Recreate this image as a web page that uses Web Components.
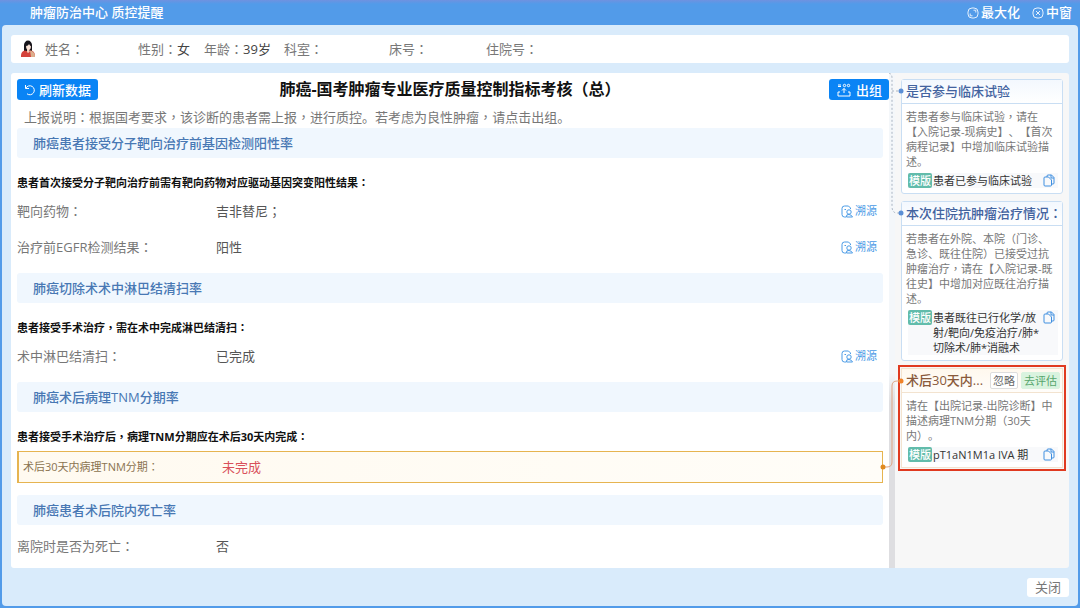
<!DOCTYPE html>
<html lang="zh-CN">
<head>
<meta charset="utf-8">
<meta name="viewport" content="width=device-width, initial-scale=1">
<title>肿瘤防治中心 质控提醒</title>
<style>
  html, body { margin: 0; }
  body {
    font-family: "Open Sans", "Noto Sans CJK SC", sans-serif;
    font-size: 13px; line-height: 20px; color: #555;
    text-spacing-trim: space-all;
  }
</style>
</head>
<body>
<qc-window></qc-window>

<script>
const BASE = `
  *, *::before { box-sizing: border-box; }
  h1, h2, h3, p { margin: 0; font-size: inherit; font-weight: inherit; }
  button { font: inherit; color: inherit; border: 0; margin: 0; padding: 0; background: none; cursor: pointer; white-space: nowrap; }
  svg { display: block; flex: none; }
  .mid { font-family: "Noto Sans CJK TC", sans-serif; line-height: 1; }
`;
// Colons, commas and brackets are set in the centred full-width form.
const mid = (s) => s.replace(/[：，；（）]/g, '<span class="mid" lang="zh-TW">$&</span>');

class Base extends HTMLElement {
  connectedCallback() {
    if (this.shadowRoot) return;
    this.attachShadow({ mode: 'open' }).innerHTML = `<style>${BASE}${this.css()}</style>${this.html()}`;
  }
  get(name) { return this.getAttribute(name) || ''; }
}

customElements.define('title-bar', class extends Base {
  css() { return `
    :host { display: flex; justify-content: space-between; height: 25px; padding: 0 8px 0 30px; color: #fff;
      background: linear-gradient(#6f92e0, #529be9 4px, #529be9); line-height: 25px; }
    h1 { font-weight: 500; }
    .tools { display: flex; gap: 12px; }
    button { display: flex; align-items: center; gap: 2px; font-weight: 500; }
  `; }
  html() { return `
    <h1>肿瘤防治中心 质控提醒</h1>
    <div class="tools">
      <button><svg width="12" height="12" viewBox="0 0 12 12" fill="none" stroke="#e4f0fd"><rect x="1" y="1" width="10" height="10" rx="4"/><path d="M6.5 3.2h2.3v2.3M5.5 8.8H3.2V6.5"/></svg>最大化</button>
      <button><svg width="12" height="12" viewBox="0 0 12 12" fill="none" stroke="#e4f0fd"><rect x="1" y="1" width="10" height="10" rx="4"/><path d="M4 4l4 4M8 4l-4 4"/></svg>中窗</button>
    </div>`; }
});

customElements.define('patient-bar', class extends Base {
  css() { return `
    :host { display: grid; grid-template-columns: 28px 93px 66px 80px 105px 97px auto; align-items: center;
      height: 28px; padding-left: 6px; background: #fff; border-radius: 3px; color: #777; }
    b { font-weight: 400; color: #444; }
    svg { margin-left: 3px; }
  `; }
  html() { return `
    <svg width="16" height="18" viewBox="0 0 16 18"><path d="M4 11V5a4 4.400 0 0 1 8 0v6z" fill="#17151b"/><path d="M1 17c0-4 1-6 4-6.500l3 1 3-1c3 .5 4 2.500 4 6.500z" fill="#d4433b"/><path d="M10 10.500c3 .5 5 2.500 5 6.500h-4z" fill="#dcae8c"/><path d="M7 9h2.500v3L8 13l-1-1z" fill="#f3cdb8"/><ellipse cx="8.500" cy="6.800" rx="2.400" ry="3" fill="#fae3d6"/><path d="M5.600 6c2 0 3-1 3.400-2.300.4 1.300 1 1.800 2.200 2.300V4L8.500 2 6 3.500z" fill="#17151b"/></svg>
    ${[['姓名', ''], ['性别', '女'], ['年龄', '39岁'], ['科室', ''], ['床号', ''], ['住院号', '']]
      .map(([k, v]) => `<span>${mid(k + '：')}<b>${v}</b></span>`).join('')}`; }
});

customElements.define('metric-section', class extends Base {
  css() { return `
    :host { display: block; margin-bottom: 8px; }
    h2 { height: 30px; padding-left: 16px; line-height: 30px; border-radius: 3px; background: #f0f7fe; color: #4878b4; font-weight: 500; }
    p { margin-top: 15px; font-size: 11px; font-weight: 700; color: #111; }
    .rows { display: flow-root; padding-top: 3px; }
    p + .rows { padding-top: 0; }
  `; }
  html() { return `<h2>${this.get('heading')}</h2>${this.get('note') ? `<p>${mid(this.get('note'))}</p>` : ''}<div class="rows"><slot></slot></div>`; }
});

customElements.define('metric-row', class extends Base {
  css() { return `
    :host { display: flex; align-items: center; box-sizing: border-box; height: 36px; padding-right: 6px; color: #777; }
    .value { color: #555; flex: 1; }
    .label { width: 199px; }
    a { display: flex; align-items: center; gap: 2px; font-size: 11px; color: #4a9be6; text-decoration: none; }
    :host([alert]) { height: 32px; margin: 4px 0; padding: 0 6px 0 4px; border: 1px solid #e6b450; border-left-width: 2px;
      background: linear-gradient(90deg, #fffaf0, #fffdf8); color: #8a7350; }
    :host([alert]) .label { font-size: 11px; }
    :host([alert]) .value { color: #d9505a; }
  `; }
  html() { return `
    <span class="label">${mid(this.get('label'))}</span><span class="value">${mid(this.get('value'))}</span>
    ${this.hasAttribute('source') ? `<a href="#source"><svg width="12" height="13" viewBox="0 0 12 13" fill="none" stroke="#4a9be6"><path d="M9.500 4V3L7.500 1H3.500Q1 1 1 3.500v6q0 2.500 2.500 2.500H5M3.500 4.500h1.500"/><circle cx="8" cy="7" r="2.200"/><path d="M5.500 12q-.5-3 2.500-2.500T11.500 12z"/></svg>溯源</a>` : ''}`; }
});

customElements.define('metric-panel', class extends Base {
  css() { return `
    :host { display: block; flex: 1; min-width: 0; padding: 6px 6px 0; background: #fff; border-radius: 3px 0 0 3px; box-sizing: border-box; }
    header { display: grid; grid-template-columns: 1fr auto 1fr; align-items: center; }
    h2 { font-size: 16px; line-height: 21px; font-weight: 700; color: #111; }
    button { display: flex; align-items: center; gap: 3px; height: 21px; padding: 0 7px; border-radius: 3px; background: #0a84f5; color: #fff; font-weight: 500; justify-self: start; }
    header button:last-child { justify-self: end; margin-right: -6px; gap: 4px; }
    .intro { padding: 7px 7px 1px; color: #777; }
    metric-section:last-child { margin-bottom: 0; }
  `; }
  html() { return `
    <header>
      <button><svg width="12" height="12" viewBox="0 0 12 12" fill="none" stroke="#fff"><path d="M1.500 1v3.500H5M1.800 4.200A4.500 4.500 0 1 1 3 9.800"/></svg>刷新数据</button>
      <h2>${mid('肺癌-国考肿瘤专业医疗质量控制指标考核（总）')}</h2>
      <button><svg width="16" height="14" viewBox="0 0 16 14" fill="none" stroke="#fff"><path d="M2 2h3M2 3.500h3"/><circle cx="8.500" cy="2.500" r="1.200"/><circle cx="12.500" cy="2.500" r="1.200"/><path d="M8 10V5.500M6 7.500l2-2 2 2M4 9H2v4h12V9h-2"/></svg>出组</button>
    </header>
    <p class="intro">${mid('上报说明：根据国考要求，该诊断的患者需上报，进行质控。若考虑为良性肿瘤，请点击出组。')}</p>
    <metric-section heading="肺癌患者接受分子靶向治疗前基因检测阳性率" note="患者首次接受分子靶向治疗前需有靶向药物对应驱动基因突变阳性结果：">
      <metric-row label="靶向药物：" value="吉非替尼；" source></metric-row>
      <metric-row label="治疗前EGFR检测结果：" value="阳性" source></metric-row>
    </metric-section>
    <metric-section heading="肺癌切除术术中淋巴结清扫率" note="患者接受手术治疗，需在术中完成淋巴结清扫：">
      <metric-row label="术中淋巴结清扫：" value="已完成" source></metric-row>
    </metric-section>
    <metric-section heading="肺癌术后病理TNM分期率" note="患者接受手术治疗后，病理TNM分期应在术后30天内完成：">
      <metric-row label="术后30天内病理TNM分期：" value="未完成" alert></metric-row>
    </metric-section>
    <metric-section heading="肺癌患者术后院内死亡率">
      <metric-row label="离院时是否为死亡：" value="否"></metric-row>
    </metric-section>`; }
});

customElements.define('hint-card', class extends Base {
  css() { return `
    :host { display: block; border: 1px solid #c9def3; border-radius: 3px; background: #fff; font-size: 11px; line-height: 15px; white-space: nowrap; }
    header { display: flex; align-items: center; gap: 4px; height: 24px; padding: 0 4px; border-bottom: 1px solid #c9def3;
      background: linear-gradient(#f3f8fe, #fff); }
    h3 { flex: 1; font-size: 13px; font-weight: 500; color: #43639f; }
    .text { padding: 5px 4px 4px; color: #777; }
    .template { display: grid; grid-template-columns: auto 1fr auto; align-items: start; gap: 1px;
      margin: 0 4px 5px 6px; background: #f8f9fb; color: #333; }
    .tag { padding: 0 1px; border-radius: 2px; background: #62bcab; color: #fff; font-weight: 500; }
    .template button { padding: 1px 3px 0 0; }
    :host([active]) { border-color: #f3e3cf; border-radius: 0; outline: 2px solid #e03a20; outline-offset: 1px; }
    :host([active]) header { border-color: #f3e3cf; background: linear-gradient(#fff8ee, #fffdfa); gap: 3px; padding-right: 2px; }
    :host([active]) h3 { color: #8a5a3c; }
    .act { height: 17px; padding: 0 2px; border: 1px solid #ddd; border-radius: 2px; background: #fff; color: #666; }
    .act.go { border-color: #d9f3df; background: #d9f3df; color: #57a56c; }
  `; }
  html() { return `
    <header><h3>${mid(this.get('heading'))}</h3>${this.hasAttribute('active') ? '<button class="act">忽略</button><button class="act go">去评估</button>' : ''}</header>
    <p class="text">${mid(this.get('text')).replace(/\|/g, '<br>')}</p>
    <div class="template"><span class="tag">模版</span><span>${this.get('template').replace(/\|/g, '<br>')}</span>
      <button aria-label="复制"><svg width="12" height="13" viewBox="0 0 12 13" fill="none" stroke="#3f8fe0"><path d="M4 3V2q0-1 1-1h3.500L11 3.500V9q0 1-1 1H9"/><path d="M8 .8V4h3"/><path d="M5.500 3H2Q1 3 1 4v7q0 1 1 1h5.500q1 0 1-1V6z"/></svg></button>
    </div>`; }
});

customElements.define('hint-list', class extends Base {
  css() { return `
    :host { display: flex; flex-direction: column; gap: 7px; box-sizing: border-box; width: 174px; flex: none; padding: 6px; background: #f7f7f7; border-radius: 0 3px 3px 0; }
  `; }
  html() { return `
    <hint-card heading="是否参与临床试验" text="若患者参与临床试验，请在|【入院记录-现病史】、【首次|病程记录】中增加临床试验描|述。" template="患者已参与临床试验"></hint-card>
    <hint-card heading="本次住院抗肿瘤治疗情况：" text="若患者在外院、本院（门诊、|急诊、既往住院）已接受过抗|肿瘤治疗，请在【入院记录-既|往史】中增加对应既往治疗描|述。" template="患者既往已行化学/放|射/靶向/免疫治疗/肺*|切除术/肺*消融术"></hint-card>
    <hint-card active heading="术后30天内..." text="请在【出院记录-出院诊断】中|描述病理TNM分期（30天|内）。" template="pT1aN1M1a IVA 期"></hint-card>`; }
});

customElements.define('qc-window', class extends Base {
  css() { return `
    :host { display: flex; flex-direction: column; min-height: 100vh; background: #529be9; }
    .body { display: flex; flex-direction: column; gap: 10px; flex: 1; margin: 0 2px 2px; padding: 10px 9px 9px; border-radius: 4px; background: #d9ebfb; }
    main { position: relative; display: flex; flex: 1; }
    .rail { width: 6px; flex: none; background: linear-gradient(#f4f7fa 300px, #dedee1 330px); }
    .links { position: absolute; top: 0; right: 164px; pointer-events: none; }
    footer { display: flex; justify-content: flex-end; }
    footer button { height: 19px; padding: 0 8px; border-radius: 3px; background: #fff; color: #777; line-height: 19px; }
  `; }
  html() { return `
    <title-bar></title-bar>
    <div class="body">
      <patient-bar></patient-bar>
      <main>
        <metric-panel></metric-panel>
        <div class="rail"></div>
        <hint-list></hint-list>
        <svg class="links" width="26" height="420" viewBox="0 0 26 420" fill="none">
          <path d="M10 0q3 1 3 5v128q0 7 5 7h4M13 18h9" stroke="#a9b4c2" stroke-dasharray="2 2"/>
          <circle cx="22" cy="18" r="2.500" fill="#5b8fd6"/><circle cx="22" cy="140" r="2.500" fill="#5b8fd6"/>
          <path d="M4 394h4q5 0 5-5v-76q0-5 5-5h4" stroke="#dfa583" />
          <circle cx="22" cy="308" r="2.500" fill="#f08228"/><circle cx="4" cy="394" r="2.500" fill="#e08a20"/>
        </svg>
      </main>
      <footer><button>关闭</button></footer>
    </div>`; }
});
</script>
</body>
</html>
